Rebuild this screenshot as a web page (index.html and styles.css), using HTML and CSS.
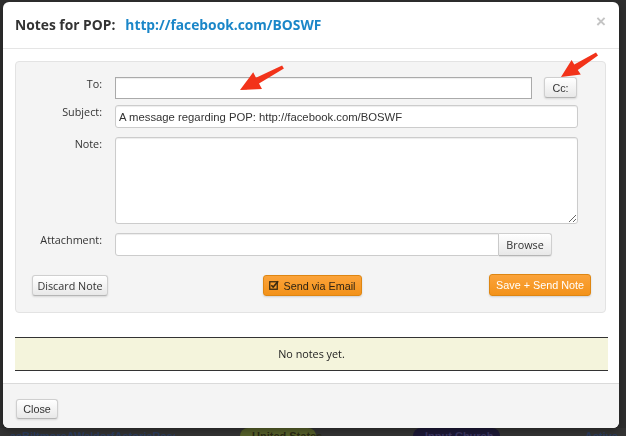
FILE: index.html
```html
<!DOCTYPE html>
<html>
<head>
<meta charset="utf-8">
<link rel="stylesheet" href="styles.css">
</head>
<body>
<div class="page">
  <div class="page-row">
    <span class="page-name">aeBiltmoreAWaldorfAstoriaResort</span>
    <span class="page-icons"><span class="dot"></span><span class="bars"></span></span>
    <span class="page-pill pill-green">United States</span>
    <span class="page-pill pill-dark">Input Church</span>
    <span class="page-status">Active</span>
  </div>
</div>

<div class="modal">
  <div class="modal-header">
    <h3 class="modal-title">Notes for POP:<a class="modal-link">http://facebook.com/BOSWF</a></h3>
    <span class="close-x">×</span>
  </div>
  <div class="modal-body">
    <div class="well">
      <div class="form-rows">
        <div class="row">
          <label class="lbl">To:</label>
          <div class="field with-cc">
            <input class="input to-input" type="text">
            <button class="btn btn-cc">Cc:</button>
          </div>
        </div>
        <div class="row">
          <label class="lbl">Subject:</label>
          <div class="field">
            <input class="input subj-input" type="text" value="A message regarding POP: http://facebook.com/BOSWF">
          </div>
        </div>
        <div class="row">
          <label class="lbl">Note:</label>
          <div class="field">
            <textarea class="input note-area"></textarea>
          </div>
        </div>
        <div class="row">
          <label class="lbl">Attachment:</label>
          <div class="field attach">
            <input class="input attach-input" type="text">
            <button class="btn btn-browse">Browse</button>
          </div>
        </div>
      </div>
      <div class="actions">
        <div class="act-left"><button class="btn btn-discard">Discard Note</button></div>
        <div class="act-mid"><button class="btn btn-orange btn-email"><span class="chk"><svg width="10" height="10" viewBox="0 0 10 10"><rect x="0.75" y="1.75" width="7.5" height="7.5" fill="none" stroke="#3a2a10" stroke-width="1.3"/><path d="M2.3 5.2 L4.2 7.1 L9.2 1.2" fill="none" stroke="#3a2a10" stroke-width="1.6"/></svg></span>Send via Email</button></div>
        <div class="act-right"><button class="btn btn-orange btn-save">Save + Send Note</button></div>
      </div>
    </div>
    <div class="notes-band">No notes yet.</div>
  </div>
  <div class="modal-footer">
    <button class="btn btn-close">Close</button>
  </div>
  <svg class="arrows" width="626" height="120" viewBox="0 0 626 120">
    <polygon fill="#f2331a" points="283.9,68.6 259.0,83.5 262.0,89.0 240,90 253.2,72.2 256.0,77.7 282.1,65.4"/>
    <polygon fill="#f2331a" points="598.0,55.6 577.8,70.1 580.8,74.5 561,77 571.6,60.1 574.3,64.5 596.0,52.4"/>
  </svg>
</div>
</body>
</html>
```

FILE: styles.css
```css
* { box-sizing: border-box; }
html, body { margin: 0; padding: 0; }
body {
  width: 626px;
  height: 436px;
  overflow: hidden;
  background: #2e2e2e;
  font-family: "Open Sans", "Liberation Sans", sans-serif;
  color: #333;
}

.page { height: 436px; display: flex; flex-direction: column; justify-content: flex-end; }
.page-row {
  display: flex;
  align-items: flex-start;
  height: 8px;
  overflow: hidden;
  font-family: "Liberation Sans", sans-serif;
  font-size: 11px;
  font-weight: bold;
  color: #2a3b5c;
  background: #333;
}
.page-name { margin-left: 10px; width: 165px; line-height: 14px; margin-top: 1px; white-space: nowrap; overflow: hidden; }
.page-icons { display: flex; gap: 4px; margin-left: 340px; margin-top: 3px; }
.page-pill { border-radius: 8px; padding: 0 12px; line-height: 16px; white-space: nowrap; }
.pill-green { background: #56602a; color: #2a2a14; margin-left: 65px; width: 76px; }
.pill-dark { background: #1c1836; color: #3a3560; margin-left: 97px; width: 87px; }
.page-status { margin-left: 85px; line-height: 14px; margin-top: 1px; }
.page-icons { display: none; }

.modal {
  position: fixed;
  left: 3px;
  top: 2px;
  width: 616px;
  height: 426px;
  background: #fff;
  border-radius: 6px;
  box-shadow: 0 3px 7px rgba(0,0,0,0.3);
  display: flex;
  flex-direction: column;
}

.modal-header {
  height: 47px;
  padding: 0 12px;
  border-bottom: 1px solid #e5e5e5;
  display: flex;
  align-items: center;
  justify-content: space-between;
}
.modal-title {
  margin: 0;
  font-size: 13.8px;
  font-weight: bold;
  color: #333;
  line-height: 20px;
  padding-top: 0px;
}
.modal-link { color: #1a86c8; margin-left: 10px; text-decoration: none; }
.close-x {
  font-family: "Liberation Sans", sans-serif;
  font-size: 17px;
  font-weight: bold;
  color: #c4c4c4;
  margin-right: 1px;
  margin-top: -7px;
}

.modal-body {
  padding: 12px 11px 12px 12px;
  flex: 1;
}

.well {
  background: #f4f4f4;
  border: 1px solid #e3e3e3;
  border-radius: 4px;
  margin-right: 2px;
  padding: 15px 0 17px 0;
  height: 252px;
}

.form-rows { display: flex; flex-direction: column; }
.row { display: flex; align-items: flex-start; }
.row + .row { margin-top: 9px; }
.row:nth-child(2) { margin-top: 6px; }
.lbl {
  width: 86px;
  text-align: right;
  font-size: 10.8px;
  line-height: 14px;
  padding-top: 0px;
  color: #333;
}
.field { margin-left: 13px; width: 463px; display: flex; }

.input {
  border: 1px solid #ccc;
  border-radius: 3px;
  background: #fff;
  box-shadow: inset 0 1px 1px rgba(0,0,0,0.075);
  font-family: "Liberation Sans", sans-serif;
  font-size: 11.3px;
  color: #333;
  padding: 0 3px;
  margin: 0;
  outline: none;
}
.to-input { width: 417px; height: 22px; border-color: #aaa; border-radius: 0; }
.subj-input { width: 463px; height: 23px; }
.note-area { width: 463px; height: 87px; resize: both; display: block; }
.attach-input { width: 384px; height: 23px; border-radius: 3px 0 0 3px; }

.btn {
  font-family: "Open Sans", "Liberation Sans", sans-serif;
  font-size: 10.8px;
  color: #333;
  background: linear-gradient(#ffffff, #e8e8e8);
  border: 1px solid #cfcfcf;
  border-bottom-color: #b5b5b5;
  border-radius: 3px;
  box-shadow: 0 1px 2px rgba(0,0,0,0.12);
  padding: 0;
  margin: 0;
  cursor: pointer;
}
.btn-cc {
  margin-left: 12px;
  width: 33px;
  height: 21px;
  font-family: "Liberation Sans", sans-serif;
}
.btn-browse {
  width: 53px;
  height: 23px;
  border-radius: 0 3px 3px 0;
  border-left: none;
  box-shadow: 0 1px 1px rgba(0,0,0,0.08);
}

.actions {
  margin-top: 17px;
  padding: 0 14px 0 16px;
  display: grid;
  grid-template-columns: 1fr auto 1fr;
  align-items: center;
}
.act-right { display: flex; justify-content: flex-end; }
.btn-discard { width: 76px; height: 21px; }
.btn-orange {
  background: linear-gradient(#fba33a, #f39219);
  border: 1px solid #de8612;
  box-shadow: 0 1px 2px rgba(0,0,0,0.15);
  font-family: "Liberation Sans", sans-serif;
}
.btn-email {
  width: 99px;
  height: 21px;
  color: #2e2416;
  display: inline-flex;
  align-items: center;
  justify-content: center;
  margin-left: 2px;
}
.chk { display: inline-flex; margin-right: 4px; margin-top: -1px; }
.btn-save { width: 102px; height: 22px; color: #fff; }

.notes-band {
  margin-top: 24px;
  height: 34px;
  background: #f4f4dc;
  border-top: 1px solid #333;
  border-bottom: 1px solid #333;
  text-align: center;
  font-size: 10.8px;
  line-height: 31px;
  color: #222;
}

.modal-footer {
  height: 45px;
  border-top: 1px solid #dadada;
  background: #f4f4f4;
  border-radius: 0 0 6px 6px;
  padding: 12px 13px;
}
.btn-close {
  width: 42px;
  height: 20px;
  font-family: "Liberation Sans", sans-serif;
}

.arrows {
  position: absolute;
  left: -3px;
  top: -2px;
  pointer-events: none;
}
```
